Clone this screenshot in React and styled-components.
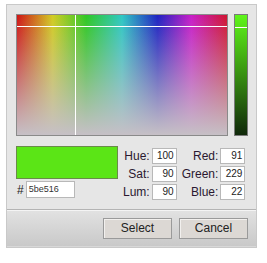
import styled, { createGlobalStyle } from 'styled-components';

const GlobalStyle = createGlobalStyle`
  body {
    margin: 0;
    background: #ffffff;
    font-family: "Liberation Sans", Arial, sans-serif;
  }
`;

const Panel = styled.div`
  margin: 4px 0 0 6px;
  width: 249px;
  border: 1px solid #c9c9c9;
  background: #e6e6e6;
  display: flex;
  flex-direction: column;
`;

const Body = styled.div`
  padding: 9px 8px 0 9px;
  display: flex;
  flex-direction: column;
  gap: 10px;
`;

const TopRow = styled.div`
  display: flex;
  gap: 6px;
`;

const Field = styled.div`
  position: relative;
  width: 210px;
  height: 120px;
  border: 1px solid #8a8a8a;
  background:
    linear-gradient(to bottom, rgba(198, 192, 198, 0) 0%, rgba(198, 192, 198, 1) 100%),
    linear-gradient(
      to right,
      #cf1414 0%,
      #d2cc22 17%,
      #2ec824 33%,
      #2ec8c4 50%,
      #1e22c2 67%,
      #c81ec8 83%,
      #d01430 100%
    );
`;

const CrossLine = styled.div`
  position: absolute;
  background: #ffffff;
  ${p => (p.$vertical ? 'top: 0; bottom: 0; width: 1px;' : 'left: 0; right: 0; height: 1px;')}
`;

const Slider = styled.div`
  position: relative;
  width: 12px;
  height: 120px;
  border: 1px solid #7a7a7a;
  background: linear-gradient(to bottom, #5ef51a 0%, #3c9a12 45%, #10280a 100%);
`;

const MidRow = styled.div`
  display: flex;
  align-items: flex-start;
`;

const SwatchCol = styled.div`
  display: flex;
  flex-direction: column;
  gap: 2px;
  width: 104px;
`;

const Swatch = styled.div`
  width: 100px;
  height: 31px;
  border: 1px solid #6a8a4a;
  background: ${p => p.$color};
`;

const HexRow = styled.div`
  display: flex;
  align-items: center;
  gap: 2px;
  padding-left: 1px;
  font-size: 12px;
  color: #222;
`;

const HexInput = styled.div`
  width: 45px;
  height: 15px;
  border: 1px solid #b8b8b8;
  background: #fff;
  font-size: 9px;
  line-height: 15px;
  padding-left: 2px;
  color: #333;
`;

const ValueGrid = styled.div`
  display: grid;
  grid-template-columns: auto 25px;
  column-gap: 2px;
  row-gap: 2px;
  align-items: center;
  margin: 2px 0 0 ${p => p.$offset}px;
`;

const Label = styled.div`
  font-size: 12px;
  color: #2a1830;
  text-align: right;
  line-height: 15px;
`;

const NumBox = styled.div`
  height: 14px;
  border: 1px solid #b8b8b8;
  background: #fff;
  font-size: 10px;
  line-height: 14px;
  text-align: right;
  padding-right: 2px;
  color: #222;
`;

const Footer = styled.div`
  margin-top: 9px;
  border-top: 1px solid #b4b4b4;
  box-shadow: inset 0 1px 0 #f4f4f4;
  background: linear-gradient(to bottom, #e2e2e2, #c9c9c9);
  height: 36px;
  display: flex;
  justify-content: flex-end;
  align-items: center;
  gap: 7px;
  padding-right: 8px;
  border-bottom: 1px solid #d8d8d8;
`;

const Button = styled.div`
  width: 67px;
  height: 19px;
  border: 1px solid #9a9a9a;
  box-shadow: inset 1px 1px 0 #f2f0ee;
  background: #dcd8d4;
  font-size: 12px;
  line-height: 19px;
  text-align: center;
  color: #222;
`;

const hsv = [
  ['Hue', '100'],
  ['Sat', '90'],
  ['Lum', '90'],
];

const rgb = [
  ['Red', '91'],
  ['Green', '229'],
  ['Blue', '22'],
];

const ValueList = ({ rows, offset }) => (
  <ValueGrid $offset={offset}>
    {rows.map(([name, value]) => [
      <Label key={name + 'l'}>{name}:</Label>,
      <NumBox key={name + 'v'}>{value}</NumBox>,
    ])}
  </ValueGrid>
);

export default function App() {
  return (
    <>
      <GlobalStyle />
      <Panel>
        <Body>
          <TopRow>
            <Field>
              <CrossLine $vertical style={{ left: 58 }} />
              <CrossLine style={{ top: 11 }} />
            </Field>
            <Slider>
              <CrossLine style={{ top: 12 }} />
            </Slider>
          </TopRow>
          <MidRow>
            <SwatchCol>
              <Swatch $color="#5be516" />
              <HexRow>
                <span>#</span>
                <HexInput>5be516</HexInput>
              </HexRow>
            </SwatchCol>
            <ValueList rows={hsv} offset={3} />
            <ValueList rows={rgb} offset={5} />
          </MidRow>
        </Body>
        <Footer>
          <Button>Select</Button>
          <Button>Cancel</Button>
        </Footer>
      </Panel>
    </>
  );
}
